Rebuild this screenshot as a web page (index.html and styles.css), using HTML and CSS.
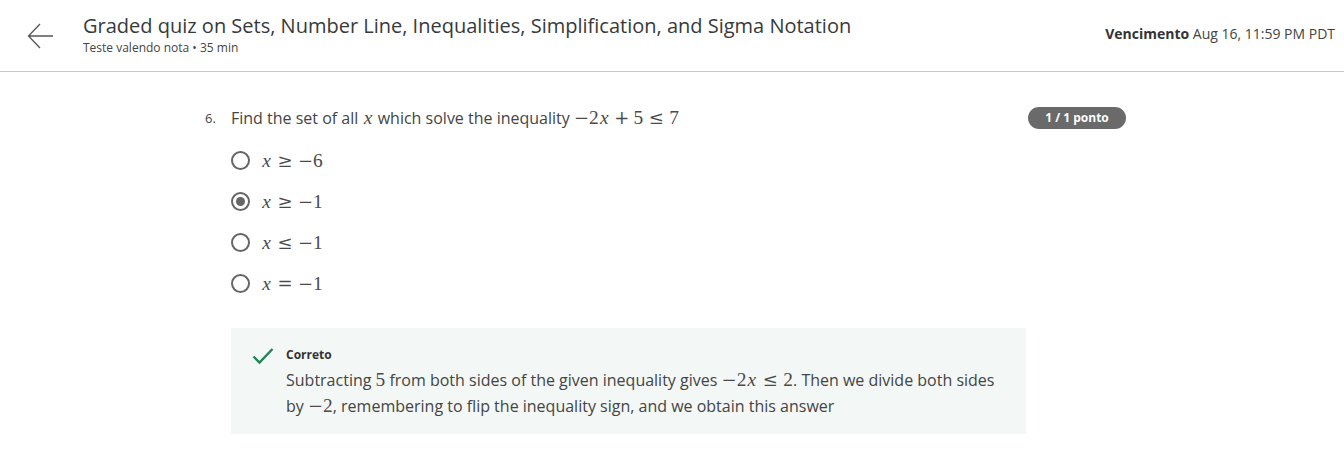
FILE: index.html
```html
<!DOCTYPE html>
<html lang="pt">
<head>
<meta charset="utf-8">
<title>Graded quiz</title>
<link rel="stylesheet" href="styles.css">
</head>
<body>
<header class="topbar">
  <div class="back">
    <svg width="28" height="28" viewBox="0 0 28 28"><path d="M26 14H2M13 2L1.5 14L13 26" fill="none" stroke="#555" stroke-width="1.3"/></svg>
  </div>
  <div class="titles">
    <h1 class="title">Graded quiz on Sets, Number Line, Inequalities, Simplification, and Sigma Notation</h1>
    <div class="subtitle">Teste valendo nota • 35 min</div>
  </div>
  <div class="due"><b>Vencimento</b> Aug 16, 11:59 PM PDT</div>
</header>
<main class="content">
  <div class="question">
    <div class="qhead">
      <span class="qnum">6.</span>
      <span class="qtext">Find the set of all <span class="m"><i>x</i></span> which solve the inequality <span class="m"><span class="un">−</span>2<i>x</i><span class="bin">+</span>5<span class="rel">≤</span>7</span></span>
      <span class="badge">1 / 1 ponto</span>
    </div>
    <ul class="options">
      <li class="opt"><span class="radio"></span><span class="m"><i>x</i><span class="rel">≥</span><span class="un">−</span>6</span></li>
      <li class="opt"><span class="radio on"></span><span class="m"><i>x</i><span class="rel">≥</span><span class="un">−</span>1</span></li>
      <li class="opt"><span class="radio"></span><span class="m"><i>x</i><span class="rel">≤</span><span class="un">−</span>1</span></li>
      <li class="opt"><span class="radio"></span><span class="m"><i>x</i><span class="rel">=</span><span class="un">−</span>1</span></li>
    </ul>
    <div class="feedback">
      <svg class="check" width="22" height="18" viewBox="0 0 22 18"><path d="M1.5 9.5L7.5 15.5L20.5 2" fill="none" stroke="#1f8354" stroke-width="2.4"/></svg>
      <div class="fbody">
        <div class="fhead">Correto</div>
        <p class="ftext">Subtracting <span class="m">5</span> from both sides of the given inequality gives <span class="m"><span class="un">−</span>2<i>x</i><span class="rel">≤</span>2</span>. Then we divide both sides by <span class="m"><span class="un">−</span>2</span>, remembering to flip the inequality sign, and we obtain this answer</p>
      </div>
    </div>
  </div>
</main>
</body>
</html>
```
FILE: styles.css
```css
* { box-sizing: border-box; }
html, body { margin: 0; padding: 0; background: #fff; }
body { font-family: "Open Sans", "Liberation Sans", sans-serif; color: #333; }

.topbar {
  display: flex;
  align-items: flex-start;
  height: 72px;
  border-bottom: 1px solid #c8c8c8;
  padding: 0 9px 0 27px;
}
.back { width: 56px; padding-top: 22px; }
.back svg { display: block; }
.titles { flex: 1; padding-top: 12px; }
.title { margin: 0; font-size: 20px; font-weight: 400; line-height: 28px; color: #373a3c; }
.subtitle { font-size: 12px; line-height: 15px; color: #444; }
.due { padding-top: 24px; font-size: 14px; color: #444; }
.due b { font-weight: 700; color: #333; }

.content { padding: 34px 0 0 203px; }
.question { width: 923px; }
.qhead { display: flex; align-items: center; height: 24px; }
.qnum { width: 28px; font-size: 13px; color: #444; padding-left: 2px; }
.qtext { flex: 1; font-size: 16px; color: #444; }
.badge {
  background: #6a6a6a; color: #fff; font-weight: 700; font-size: 12px;
  width: 98px; height: 22px; line-height: 22px; text-align: center;
  border-radius: 11px;
}

.m { font-family: "Liberation Serif", "DejaVu Serif", serif; font-size: 19.4px; color: #4a4a4a; white-space: nowrap; }
.m i { font-style: italic; padding: 0 0.064em; }
.m .rel, .m .bin, .m .un { font-family: "DejaVu Serif", serif; font-size: 0.93em; }
.m .rel { margin: 0 0.3em; }
.m .bin { margin: 0 0.24em; }

.options { list-style: none; margin: 10px 0 0 28px; padding: 0; }
.opt { display: flex; align-items: center; height: 41px; }
.radio {
  width: 19px; height: 19px; border: 2px solid #666; border-radius: 50%;
  margin-right: 11px; display: flex; align-items: center; justify-content: center;
}
.radio.on::after { content: ""; width: 9px; height: 9px; border-radius: 50%; background: #666; }

.feedback {
  display: flex; margin: 24px 0 0 28px; width: 795px; height: 106px;
  background: #f3f8f6; padding: 19px 20px 0 21px;
}
.check { flex: none; margin-right: 12px; }
.fbody { flex: 1; }
.fhead { font-size: 12px; font-weight: 700; color: #333; line-height: 16px; }
.ftext { margin: 4px 0 0; font-size: 16px; line-height: 25px; color: #444; }
```
